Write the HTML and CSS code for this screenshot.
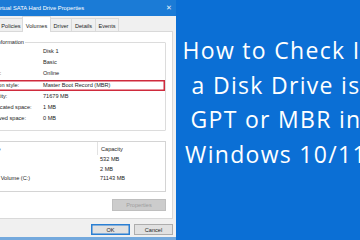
FILE: index.html
```html
<!DOCTYPE html>
<html lang="en">
<head>
  <meta charset="UTF-8">
  <meta name="viewport" content="width=device-width, initial-scale=1.0">
  <title>How to Check If a Disk Drive is GPT or MBR</title>
  <link rel="stylesheet" href="styles.css">
</head>
<body>

  <div class="screen">
    <div class="dialog">
      <div class="dialog-inner">
        <div class="titlebar">
          <span class="title">Virtual SATA Hard Drive Properties</span>
          <span class="close">✕</span>
        </div>

        <div class="tabs">
          <div class="tab tab-general">General</div>
          <div class="tab tab-policies">Policies</div>
          <div class="tab tab-volumes active">Volumes</div>
          <div class="tab tab-driver">Driver</div>
          <div class="tab tab-details">Details</div>
          <div class="tab tab-events">Events</div>
        </div>

        <div class="page">
          <fieldset class="group">
            <legend>Information</legend>
            <div class="row"><span>Disk:</span><span>Disk 1</span></div>
            <div class="row"><span>Type:</span><span>Basic</span></div>
            <div class="row"><span>Status:</span><span>Online</span></div>
            <div class="row highlight"><span>Partition style:</span><span>Master Boot Record (MBR)</span></div>
            <div class="row"><span>Capacity:</span><span>71679 MB</span></div>
            <div class="row"><span>Unallocated space:</span><span>1 MB</span></div>
            <div class="row"><span>Reserved space:</span><span>0 MB</span></div>
          </fieldset>

          <div class="list">
            <div class="list-head"><span class="col-name">Volume</span><span class="col-size">Capacity</span></div>
            <div class="list-row"><span class="col-name"></span><span class="col-size">532 MB</span></div>
            <div class="list-row"><span class="col-name"></span><span class="col-size">2 MB</span></div>
            <div class="list-row"><span class="col-name">Simple Volume (C:)</span><span class="col-size">71143 MB</span></div>
          </div>

          <div class="page-actions">
            <button class="btn btn-props" disabled>Properties</button>
          </div>
        </div>

        <div class="footer">
          <button class="btn btn-default">OK</button>
          <button class="btn">Cancel</button>
        </div>
      </div>
    </div>

    <div class="promo">
      <p>How to Check If</p>
      <p>a Disk Drive is</p>
      <p>GPT or MBR in</p>
      <p>Windows 10/11</p>
    </div>
  </div>

</body>
</html>
```

FILE: styles.css
```css
html {
  overflow: hidden;
}

body {
  margin: 0;
  padding: 0;
  font-family: 'Liberation Sans', Arial, sans-serif;
}

.screen {
  display: flex;
  width: 376px;
  height: 240px;
}

/* Windows properties dialog, cut off on the left */
.dialog {
  width: 176px;
  height: 240px;
  flex-shrink: 0;
  overflow: hidden;
  background-color: #f0f0f0;
  border-bottom: 3px solid #74a9dd;
  box-sizing: border-box;
}

.dialog-inner {
  width: 236px;
  margin-left: -60px;
  display: flex;
  flex-direction: column;
  font-size: 5.6px;
  color: #1e1e1e;
}

.titlebar {
  height: 16px;
  background-color: #1b7bd6;
  color: #ffffff;
  display: flex;
  align-items: center;
  justify-content: space-between;
  padding: 0 4px 0 55px;
}

.title {
  font-size: 5.8px;
}

.close {
  font-size: 7px;
  color: #e8f1fb;
}

.tabs {
  height: 15px;
  display: flex;
  align-items: flex-end;
  padding-left: 34px;
}

.tab {
  height: 13px;
  line-height: 14px;
  text-align: center;
  box-sizing: border-box;
  border: 1px solid #dadada;
  border-bottom: none;
  margin-right: -1px;
  background-color: #f0f0f0;
}

.tab.active {
  height: 16px;
  margin-bottom: -1px;
  line-height: 19px;
  background-color: #ffffff;
  position: relative;
  z-index: 1;
}

.tab-general { width: 26px; }
.tab-policies { width: 24px; }
.tab-volumes { width: 29px; }
.tab-driver { width: 22px; }
.tab-details { width: 25px; }
.tab-events { width: 24px; }

.page {
  margin-left: 34px;
  width: 199px;
  height: 188px;
  box-sizing: border-box;
  background-color: #ffffff;
  border: 1px solid #d9d9d9;
  display: flex;
  flex-direction: column;
}

.group {
  margin: 6px 6px 0 3px;
  padding: 0 0 6px 5px;
  border: 1px solid #dcdcdc;
  border-radius: 1px;
}

.group legend {
  margin-left: 11px;
  padding: 0 1px;
  line-height: 8px;
}

.row {
  display: grid;
  grid-template-columns: 59px 1fr;
  height: 11.2px;
  line-height: 11.2px;
  white-space: nowrap;
}

.row.highlight {
  box-shadow: inset 0 0 0 1.5px #cf2b3d;
}

.list {
  margin: 10px 6px 0 3px;
  height: 51px;
  box-sizing: border-box;
  border: 1px solid #d4d4d4;
}

.list-head,
.list-row {
  display: flex;
  white-space: nowrap;
}

.list-head {
  height: 13px;
  line-height: 14px;
}

.list-head .col-size {
  border-left: 1px solid #e2e2e2;
}

.list-row {
  height: 9.4px;
  line-height: 9.4px;
}

.col-name {
  width: 118px;
  padding-left: 3px;
  box-sizing: border-box;
}

.col-size {
  padding-left: 3px;
}

.page-actions {
  display: flex;
  justify-content: flex-end;
  margin: 7px 6px 0 0;
}

.btn {
  font-family: 'Liberation Sans', Arial, sans-serif;
  font-size: 5.6px;
  color: #1e1e1e;
  height: 11px;
  padding: 0;
  background-color: #e1e1e1;
  border: 1px solid #adadad;
  box-sizing: border-box;
}

.btn-props {
  width: 54px;
  height: 12px;
  background-color: #cccccc;
  border-color: #bfbfbf;
  color: #9d9d9d;
}

.footer {
  height: 18px;
  display: flex;
  justify-content: flex-end;
  align-items: flex-start;
  gap: 4px;
  padding: 5px 3px 0 0;
  box-sizing: border-box;
}

.footer .btn {
  width: 39px;
}

.btn-default {
  border-color: #2a7fd3;
  box-shadow: inset 0 0 0 0.5px #2a7fd3;
}

/* blue title card on the right */
.promo {
  width: 200px;
  flex-shrink: 0;
  background-color: #0b6fd5;
  color: #ffffff;
  font-family: 'Open Sans', sans-serif;
  font-size: 23px;
  letter-spacing: 1.3px;
  text-align: center;
  padding-top: 33px;
  box-sizing: border-box;
}

.promo p {
  margin: 0;
  line-height: 34.5px;
  white-space: nowrap;
}
```
